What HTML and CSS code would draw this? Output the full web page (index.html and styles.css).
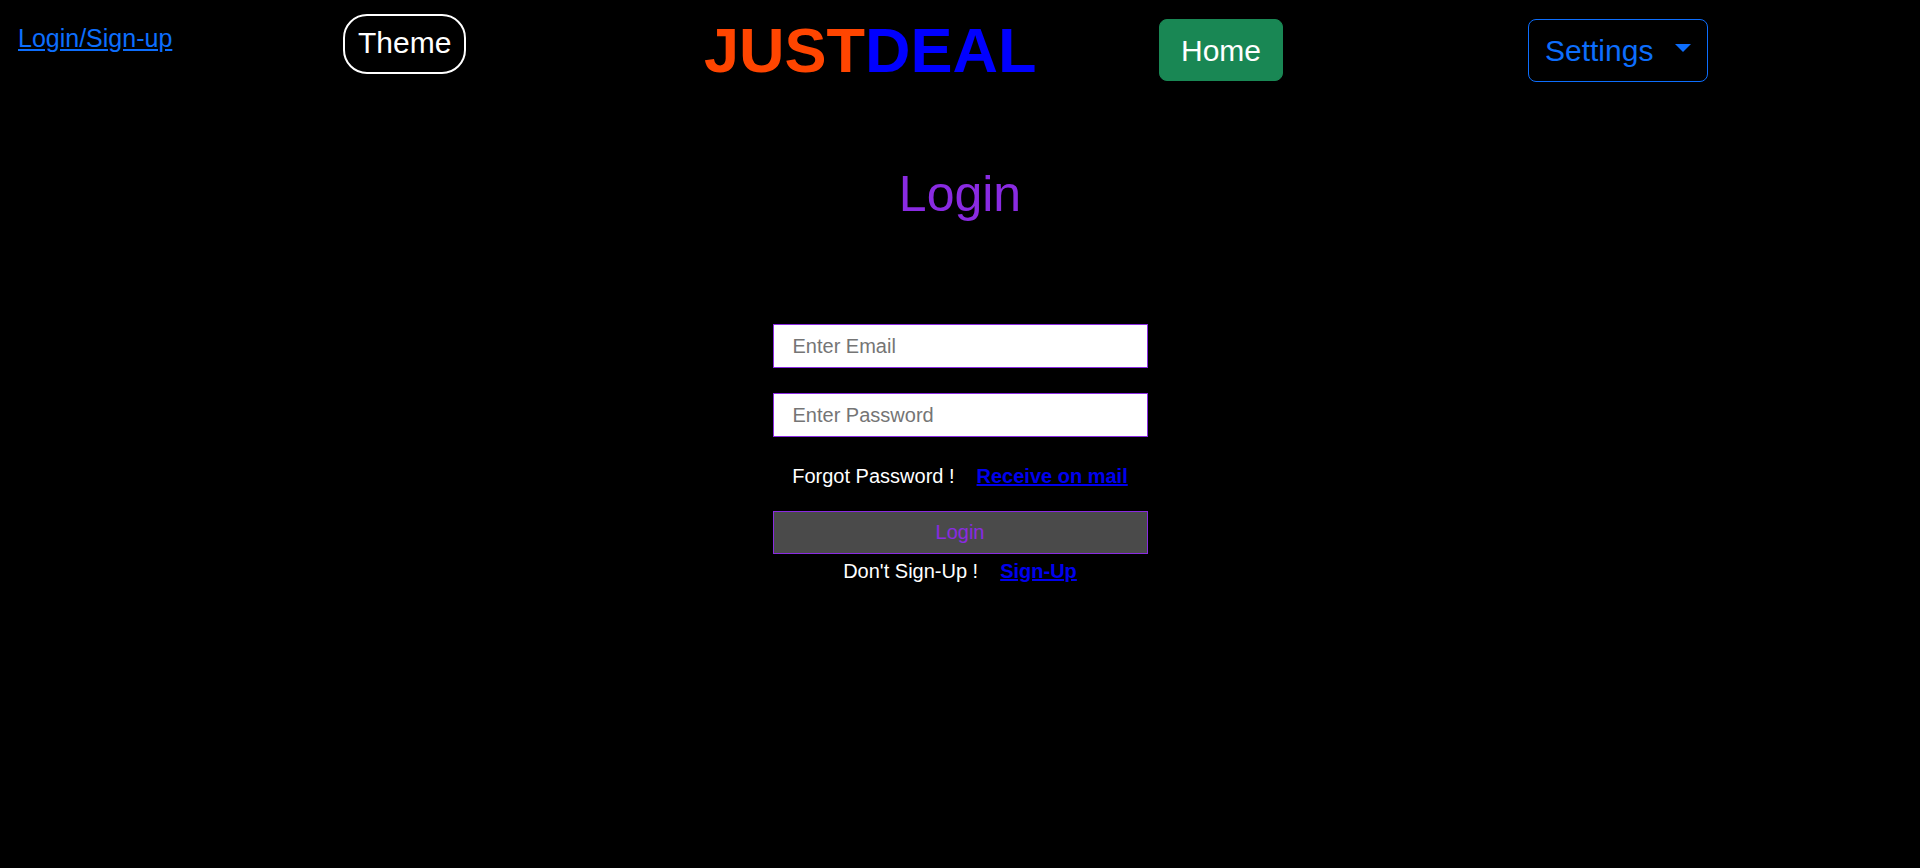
FILE: index.html
```html
<!DOCTYPE html>
<html lang="en">
<head>
<meta charset="utf-8">
<title>JustDeal - Login</title>
<link rel="stylesheet" href="styles.css">
</head>
<body>
<header class="topbar">
  <a class="auth-link" href="#">Login/Sign-up</a>
  <button class="theme-btn" type="button">Theme</button>
  <div class="brand"><span class="brand-just">JUST</span><span class="brand-deal">DEAL</span></div>
  <button class="home-btn" type="button">Home</button>
  <button class="settings-btn" type="button">Settings<span class="caret"></span></button>
</header>
<main class="login-page">
  <h1 class="login-title">Login</h1>
  <form class="login-form">
    <input class="field field-email" type="email" placeholder="Enter Email">
    <input class="field field-password" type="password" placeholder="Enter Password">
    <div class="forgot-row">
      <span>Forgot Password !</span>
      <a class="strong-link" href="#">Receive on mail</a>
    </div>
    <button class="submit-btn" type="button">Login</button>
    <div class="signup-row">
      <span>Don't Sign-Up !</span>
      <a class="strong-link" href="#">Sign-Up</a>
    </div>
  </form>
</main>
</body>
</html>
```

FILE: styles.css
```css
* {
  box-sizing: border-box;
}

html, body {
  margin: 0;
  padding: 0;
  background: #000;
  min-height: 100%;
}

body {
  font-family: "Liberation Sans", Arial, Helvetica, sans-serif;
  color: #fff;
  line-height: 1.5;
}

.topbar {
  display: grid;
  grid-template-columns: 325px 361px 455px 369px 1fr;
  align-items: start;
  height: 90px;
  padding-left: 18px;
}

.auth-link {
  justify-self: start;
  margin-top: 20px;
  font-size: 25px;
  line-height: 37.5px;
  color: #0d6efd;
  text-decoration: underline;
}

.theme-btn {
  justify-self: start;
  margin-top: 14px;
  font-family: inherit;
  font-size: 30px;
  line-height: 42px;
  padding: 6px 13px 8px;
  color: #fff;
  background: #000;
  border: 2px solid #fff;
  border-radius: 24px;
}

.brand {
  justify-self: start;
  margin-top: 19px;
  font-size: 63px;
  font-weight: bold;
  line-height: 63px;
  white-space: nowrap;
}

.brand-just {
  color: #ff4500;
}

.brand-deal {
  color: #0000ff;
}

.home-btn {
  justify-self: start;
  margin-top: 19px;
  font-family: inherit;
  font-size: 30px;
  line-height: 45px;
  padding: 7.5px 21px;
  color: #fff;
  background: #198754;
  border: 1px solid #198754;
  border-radius: 8px;
}

.settings-btn {
  justify-self: start;
  display: flex;
  align-items: center;
  margin-top: 19px;
  height: 63px;
  font-family: inherit;
  font-size: 30px;
  line-height: 45px;
  padding: 0 16px 0 16px;
  color: #0d6efd;
  background: transparent;
  border: 1px solid #0d6efd;
  border-radius: 8px;
}

.caret {
  display: inline-block;
  margin-left: 22px;
  margin-top: -5px;
  width: 0;
  height: 0;
  border-top: 8.5px solid #0d6efd;
  border-left: 8.5px solid transparent;
  border-right: 8.5px solid transparent;
}

.login-page {
  display: flex;
  flex-direction: column;
  align-items: center;
}

.login-title {
  margin: 74px 0 0;
  font-size: 50px;
  font-weight: normal;
  line-height: 60px;
  color: #8a2be2;
}

.login-form {
  width: 375px;
  margin-top: 100px;
  display: flex;
  flex-direction: column;
  align-items: stretch;
}

.field {
  width: 100%;
  height: 44px;
  padding: 0 18px 0 19px;
  font-family: inherit;
  font-size: 20px;
  color: #000;
  background: #fff;
  border: 1px solid #8a2be2;
  border-radius: 0;
  outline: none;
}

.field::placeholder {
  color: #757575;
}

.field-password {
  margin-top: 25px;
}

.forgot-row,
.signup-row {
  display: flex;
  justify-content: center;
  gap: 22px;
  font-size: 20px;
  line-height: 30px;
  color: #fff;
  white-space: nowrap;
}

.forgot-row {
  margin-top: 24px;
}

.strong-link {
  color: #0000ee;
  font-weight: bold;
  text-decoration: underline;
}

.submit-btn {
  margin-top: 20px;
  height: 43px;
  font-family: inherit;
  font-size: 20px;
  color: #8a2be2;
  background: #4a4a4a;
  border: 1px solid #8a2be2;
  border-radius: 0;
}

.signup-row {
  margin-top: 2px;
}
```
